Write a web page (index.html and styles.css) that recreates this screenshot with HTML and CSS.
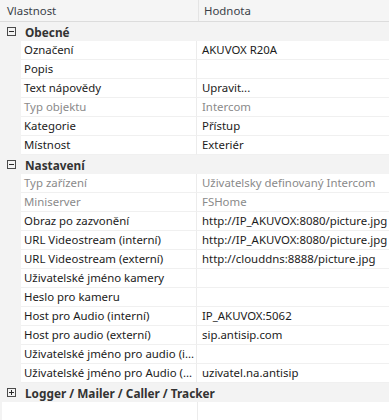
FILE: index.html
```html
<!DOCTYPE html>
<html lang="cs">
<head>
<meta charset="utf-8">
<link rel="stylesheet" href="styles.css">
</head>
<body>
<div class="grid">
  <div class="head">
    <div class="hcell hprop">Vlastnost</div>
    <div class="hcell hval">Hodnota</div>
  </div>

  <div class="cat"><span class="exp minus"></span><span class="cname">Obecné</span></div>
  <div class="row"><div class="gut"></div><div class="prop">Označení</div><div class="val">AKUVOX R20A</div></div>
  <div class="row"><div class="gut"></div><div class="prop">Popis</div><div class="val"></div></div>
  <div class="row"><div class="gut"></div><div class="prop">Text nápovědy</div><div class="val">Upravit...</div></div>
  <div class="row dis"><div class="gut"></div><div class="prop">Typ objektu</div><div class="val">Intercom</div></div>
  <div class="row"><div class="gut"></div><div class="prop">Kategorie</div><div class="val">Přístup</div></div>
  <div class="row"><div class="gut"></div><div class="prop">Místnost</div><div class="val">Exteriér</div></div>

  <div class="cat"><span class="exp minus"></span><span class="cname">Nastavení</span></div>
  <div class="row dis"><div class="gut"></div><div class="prop">Typ zařízení</div><div class="val">Uživatelsky definovaný Intercom</div></div>
  <div class="row dis"><div class="gut"></div><div class="prop">Miniserver</div><div class="val">FSHome</div></div>
  <div class="row"><div class="gut"></div><div class="prop">Obraz po zazvonění</div><div class="val">http://IP_AKUVOX:8080/picture.jpg</div></div>
  <div class="row"><div class="gut"></div><div class="prop">URL Videostream (interní)</div><div class="val">http://IP_AKUVOX:8080/picture.jpg</div></div>
  <div class="row"><div class="gut"></div><div class="prop">URL Videostream (externí)</div><div class="val">http://clouddns:8888/picture.jpg</div></div>
  <div class="row"><div class="gut"></div><div class="prop">Uživatelské jméno kamery</div><div class="val"></div></div>
  <div class="row"><div class="gut"></div><div class="prop">Heslo pro kameru</div><div class="val"></div></div>
  <div class="row"><div class="gut"></div><div class="prop">Host pro Audio (interní)</div><div class="val">IP_AKUVOX:5062</div></div>
  <div class="row"><div class="gut"></div><div class="prop">Host pro audio (externí)</div><div class="val">sip.antisip.com</div></div>
  <div class="row"><div class="gut"></div><div class="prop">Uživatelské jméno pro audio (i...</div><div class="val"></div></div>
  <div class="row"><div class="gut"></div><div class="prop">Uživatelské jméno pro Audio (...</div><div class="val">uzivatel.na.antisip</div></div>

  <div class="cat"><span class="exp plus"></span><span class="cname">Logger / Mailer / Caller / Tracker</span></div>
  <div class="empty"><div class="eprop"></div><div class="eval"></div></div>
</div>
</body>
</html>
```

FILE: styles.css
```css
html, body {
  margin: 0;
  padding: 0;
  background: #ffffff;
}
body {
  font-family: "Noto Sans", "Open Sans", sans-serif;
  font-size: 11.4px;
  color: #1b1b1b;
  width: 389px;
  height: 420px;
  overflow: hidden;
}
.grid {
  display: flex;
  flex-direction: column;
  width: 389px;
  height: 420px;
}
.head {
  display: flex;
  height: 21px;
  background: #f5f5f5;
  border-bottom: 1px solid #dcdcdc;
  flex: none;
}
.hcell {
  line-height: 21px;
  color: #3a3f48;
  white-space: nowrap;
}
.hprop {
  width: 191px;
  padding-left: 7px;
  border-right: 1px solid #e4e4e4;
}
.hval {
  padding-left: 5px;
}
.cat {
  display: flex;
  align-items: center;
  height: 19px;
  background: #f3f3f3;
  flex: none;
  white-space: nowrap;
  overflow: hidden;
}
.exp {
  position: relative;
  width: 9px;
  height: 9px;
  border: 1px solid #4a4a4a;
  box-sizing: border-box;
  margin-left: 7px;
  margin-right: 9px;
  flex: none;
}
.exp::before {
  content: "";
  position: absolute;
  left: 1px;
  top: 3px;
  width: 5px;
  height: 1px;
  background: #2a2a2a;
}
.plus::after {
  content: "";
  position: absolute;
  left: 3px;
  top: 1px;
  width: 1px;
  height: 5px;
  background: #2a2a2a;
}
.cname {
  font-weight: bold;
  font-size: 11.8px;
  color: #333333;
}
.row {
  display: flex;
  height: 19px;
  flex: none;
  white-space: nowrap;
}
.gut {
  width: 21px;
  background: #f3f3f3;
  flex: none;
}
.prop {
  width: 171px;
  padding-left: 3px;
  padding-right: 1px;
  flex: none;
  border-right: 1px solid #ececec;
  border-bottom: 1px solid #f0f0f0;
  line-height: 18px;
  overflow: hidden;
}
.val {
  flex: 1;
  padding-left: 5px;
  border-bottom: 1px solid #f0f0f0;
  line-height: 18px;
  overflow: hidden;
}
.dis .prop, .dis .val {
  color: #8a8a8a;
}
.empty {
  display: flex;
  flex: 1;
}
.eprop {
  width: 195px;
  border-left: 2px solid #f3f3f3;
  border-right: 1px solid #ececec;
  flex: none;
}
.eval {
  flex: 1;
}
```
